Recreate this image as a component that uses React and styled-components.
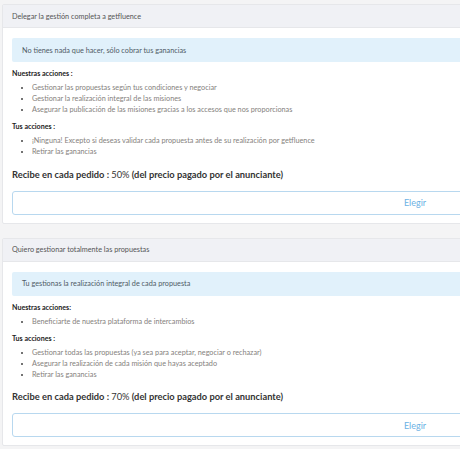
import React from "react";
import styled, { createGlobalStyle } from "styled-components";

const GlobalStyle = createGlobalStyle`
  html, body {
    margin: 0;
    padding: 0;
    background: #f4f4f5;
  }
  body {
    font-family: Lato, "Noto Sans", sans-serif;
  }
`;

const Viewport = styled.div`
  width: 100vw;
  overflow: hidden;
`;

const Page = styled.div`
  display: flex;
  flex-direction: column;
  gap: 14px;
  padding: 4px 0 4px 2px;
  width: 826px;
`;

const Card = styled.section`
  background: #fff;
  border: 1px solid #e6e7ea;
  border-radius: 2px;
`;

const CardHeader = styled.div`
  background: #f0f1f5;
  border-bottom: 1px solid #e6e7ea;
  height: 22px;
  display: flex;
  align-items: center;
  padding: 0 9px;
  font-size: 7.27px;
  color: #555;
`;

const CardBody = styled.div`
  padding: 10px 9px 8px;
  display: flex;
  flex-direction: column;
`;

const Alert = styled.div`
  background: #e1f1fb;
  border-radius: 2px;
  height: 24px;
  display: flex;
  align-items: center;
  padding: 0 10px;
  font-size: 7.27px;
  color: #4f5b66;
`;

const SectionTitle = styled.div`
  font-size: 7.1px;
  font-weight: 700;
  color: #222;
  line-height: 12px;
  margin-top: 6px;
`;

const List = styled.ul`
  margin: 2px 0 0;
  padding: 0 0 0 20px;
  list-style: disc;
  font-size: 7.27px;
  line-height: 11px;
  color: #85817d;
  li::marker {
    color: #444;
  }
`;

const Earn = styled.div`
  font-size: 9.3px;
  font-weight: 700;
  color: #333;
  margin-top: 9.5px;
  line-height: 16px;
`;

const Percent = styled.span`
  font-weight: 400;
`;

const ChooseButton = styled.button`
  margin-top: 8px;
  height: 24px;
  width: 100%;
  background: #fff;
  border: 1px solid #b8d8ef;
  border-radius: 3px;
  color: #6cb2e4;
  font-family: inherit;
  font-size: 9px;
  cursor: pointer;
`;

const plans = [
  {
    title: "Delegar la gestión completa a getfluence",
    alert: "No tienes nada que hacer, sólo cobrar tus ganancias",
    oursLabel: "Nuestras acciones :",
    ours: [
      "Gestionar las propuestas según tus condiciones y negociar",
      "Gestionar la realización integral de las misiones",
      "Asegurar la publicación de las misiones gracias a los accesos que nos proporcionas",
    ],
    yours: [
      "¡Ninguna! Excepto si deseas validar cada propuesta antes de su realización por getfluence",
      "Retirar las ganancias",
    ],
    percent: "50%",
  },
  {
    title: "Quiero gestionar totalmente las propuestas",
    alert: "Tu gestionas la realización integral de cada propuesta",
    oursLabel: "Nuestras acciones:",
    ours: ["Beneficiarte de nuestra plataforma de intercambios"],
    yours: [
      "Gestionar todas las propuestas (ya sea para aceptar, negociar o rechazar)",
      "Asegurar la realización de cada misión que hayas aceptado",
      "Retirar las ganancias",
    ],
    percent: "70%",
  },
];

function Plan({ plan }) {
  return (
    <Card>
      <CardHeader>{plan.title}</CardHeader>
      <CardBody>
        <Alert>{plan.alert}</Alert>
        <SectionTitle>{plan.oursLabel}</SectionTitle>
        <List>
          {plan.ours.map((item) => (
            <li key={item}>{item}</li>
          ))}
        </List>
        <SectionTitle>Tus acciones :</SectionTitle>
        <List>
          {plan.yours.map((item) => (
            <li key={item}>{item}</li>
          ))}
        </List>
        <Earn>
          Recibe en cada pedido : <Percent>{plan.percent}</Percent> (del precio
          pagado por el anunciante)
        </Earn>
        <ChooseButton>Elegir</ChooseButton>
      </CardBody>
    </Card>
  );
}

export default function App() {
  return (
    <Viewport>
      <GlobalStyle />
      <Page>
        {plans.map((plan) => (
          <Plan key={plan.title} plan={plan} />
        ))}
      </Page>
    </Viewport>
  );
}
